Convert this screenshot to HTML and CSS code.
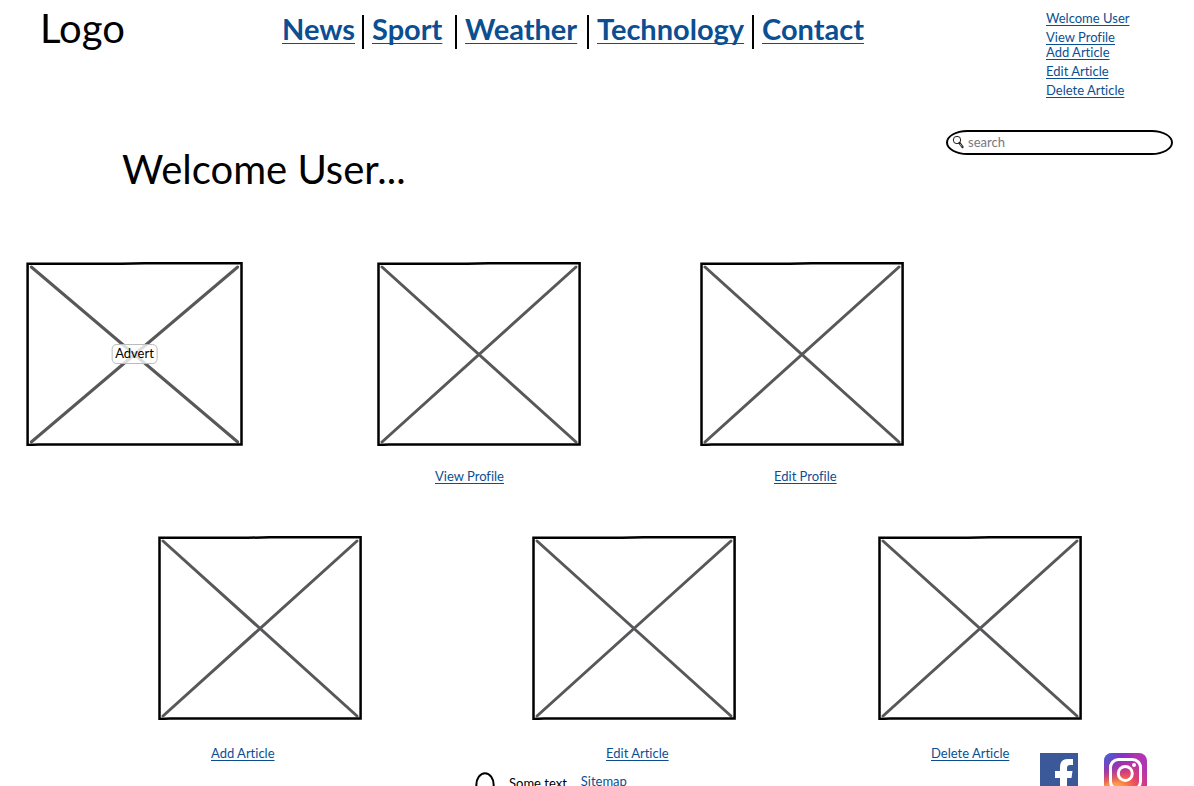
FILE: index.html
```html
<!DOCTYPE html>
<html lang="en">
<head>
<meta charset="utf-8">
<title>Welcome User</title>
<link rel="stylesheet" href="styles.css">
</head>
<body>
<svg class="defs" aria-hidden="true">
  <symbol id="placeholder" viewBox="0 0 204 184" preserveAspectRatio="none">
    <path class="cross" d="M5 5 199 180M199 5 5 180"/>
    <path class="frame" d="M1.500 1.800 90 1.800 112 1.300H202.600V182.600H12L1.500 182.900Z"/>
  </symbol>
</svg>
<header class="header">
  <div class="logo">Logo</div>
  <nav class="nav">
    <div><a href="#news">News</a></div>
    <div><a href="#sport">Sport</a></div>
    <div><a href="#weather">Weather</a></div>
    <div><a href="#technology">Technology</a></div>
    <div><a href="#contact">Contact</a></div>
  </nav>
  <ul class="user-links">
    <li><a href="#user">Welcome User</a></li>
    <li><a href="#profile">View Profile</a></li>
    <li class="tight"><a href="#add">Add Article</a></li>
    <li><a href="#edit">Edit Article</a></li>
    <li><a href="#delete">Delete Article</a></li>
  </ul>
</header>
<main>
  <div class="intro">
    <h1>Welcome User...</h1>
    <label class="search">
      <svg viewBox="0 0 12 14" width="12" height="14" aria-hidden="true"><circle cx="5" cy="5" r="3.700" fill="none" stroke="#222" stroke-width="1"/><path d="M7.500 8 10.500 12" stroke="#222" stroke-width="2.200" stroke-linecap="round"/><path d="M8 9 10 11.500" stroke="#fff" stroke-width=".6"/></svg>
      <input type="search" placeholder="search" aria-label="search">
    </label>
  </div>
  <div class="row row-first">
    <div class="card advert">
      <svg class="picture"><use href="#placeholder"/></svg>
      <span class="tag">Advert</span>
    </div>
    <div class="card">
      <svg class="picture"><use href="#placeholder"/></svg>
      <a class="caption inset-medium" href="#profile">View Profile</a>
    </div>
    <div class="card">
      <svg class="picture"><use href="#placeholder"/></svg>
      <a class="caption inset-large" href="#edit-profile">Edit Profile</a>
    </div>
  </div>
  <div class="row row-second">
    <div class="card">
      <svg class="picture"><use href="#placeholder"/></svg>
      <a class="caption" href="#add">Add Article</a>
    </div>
    <div class="card">
      <svg class="picture"><use href="#placeholder"/></svg>
      <a class="caption inset-large" href="#edit">Edit Article</a>
    </div>
    <div class="card">
      <svg class="picture"><use href="#placeholder"/></svg>
      <a class="caption" href="#delete">Delete Article</a>
    </div>
  </div>
</main>
<footer class="footer">
  <div class="footer-text">
    <svg viewBox="0 0 20 28" width="20" height="28" aria-hidden="true"><ellipse cx="10" cy="13" rx="8.700" ry="11.800" fill="none" stroke="#000" stroke-width="2"/></svg>
    <span>Some text</span>
    <a href="#sitemap">Sitemap</a>
  </div>
  <div class="social">
    <a href="#facebook" aria-label="Facebook"><svg viewBox="0 0 38 38" width="38" height="38"><path fill="#3b5998" d="M0 0H38V38H0Z"/><path fill="#fff" d="M20 38V25H15V18H20V14Q20 6 28 6H33V12H30Q27 12 27 15V18H32.500L31.500 25H27V38Z"/></svg></a>
    <a href="#instagram" aria-label="Instagram"><svg viewBox="0 0 43 43" width="43" height="43"><defs><radialGradient id="warm" cx=".25" cy="1" r="1.100"><stop offset="0" stop-color="#fd5"/><stop offset=".15" stop-color="#fdc050"/><stop offset=".38" stop-color="#f87040"/><stop offset=".58" stop-color="#e04070"/><stop offset=".85" stop-color="#b035b0"/></radialGradient><radialGradient id="cool" cx="0" cy="0" r=".75"><stop offset="0" stop-color="#3771d8"/><stop offset=".3" stop-color="#5050d0" stop-opacity=".8"/><stop offset="1" stop-color="#60f" stop-opacity="0"/></radialGradient></defs><rect width="43" height="43" rx="8" fill="url(#warm)"/><rect width="43" height="43" rx="8" fill="url(#cool)"/><g fill="none" stroke="#fff" stroke-width="3"><rect x="6.500" y="6.500" width="30" height="30" rx="8"/><circle cx="21.300" cy="20.500" r="7"/></g><circle cx="30" cy="12" r="2" fill="#fff"/></svg></a>
  </div>
</footer>
</body>
</html>
```
FILE: styles.css
```css
* { box-sizing: border-box; }
html { overflow-x: hidden; scrollbar-width: none; }
body {
  margin: 0;
  background: #fff;
  color: #000;
  font: 13px/16px Lato, "Open Sans", sans-serif;
  font-variant-ligatures: none;
}
a {
  color: #0b4f92;
  text-underline-offset: 2px;
  text-decoration-thickness: 1px;
  text-decoration-skip-ink: none;
}
.defs { display: none; }

.header {
  display: grid;
  grid-template-columns: 242fr 764fr 148fr;
  align-items: start;
  padding: 11px 0 0 40px;
}
.logo { font-size: 40px; line-height: 34px; }
.nav {
  display: grid;
  grid-template-columns:
    minmax(max-content, 82fr) minmax(max-content, 93fr)
    minmax(max-content, 132fr) minmax(max-content, 165fr)
    minmax(max-content, 292fr);
  padding-top: 4px;
}
.nav div {
  height: 34px;
  padding-left: 8px;
  border-right: 2px solid #000;
  line-height: 28px;
}
.nav div:first-child { padding-left: 0; }
.nav div:last-child { border-right: 0; }
.nav a {
  font-size: 29px;
  font-weight: 700;
  text-underline-offset: 3px;
}
.user-links {
  display: flex;
  flex-direction: column;
  gap: 4px;
  margin: 0;
  padding: 0;
  list-style: none;
  line-height: 15px;
}
.user-links .tight { margin-top: -4px; }

.intro {
  display: flex;
  justify-content: space-between;
  align-items: flex-start;
  margin-top: 32px;
  padding: 0 21px 0 122px;
}
h1 {
  margin: 0;
  padding-top: 14px;
  font-size: 40px;
  font-weight: 400;
  line-height: 50px;
}
.search {
  display: flex;
  align-items: center;
  gap: 4px;
  width: 227px;
  height: 25px;
  padding: 0 12px 2px 4px;
  border: 2px solid #000;
  border-radius: 22px / 13px;
}
.search input {
  flex: 1;
  min-width: 0;
  padding: 0;
  border: 0;
  outline: 0;
  background: none;
  font: inherit;
}
.search input::placeholder { color: #777780; opacity: 1; }

.row { display: grid; }
.row-first {
  grid-template-columns: 26fr 217fr 134fr 204fr 119fr 204fr 290fr;
  margin-top: 68px;
}
.row-second {
  grid-template-columns: 158fr 204fr 170fr 204fr 142fr 204fr 112fr;
  margin-top: 51px;
}
.card { min-width: 0; }
.card:nth-child(1) { grid-column: 2; }
.card:nth-child(2) { grid-column: 4; }
.card:nth-child(3) { grid-column: 6; }
.picture { display: block; width: 100%; height: 184px; }
.cross, .frame { fill: none; vector-effect: non-scaling-stroke; }
.cross { stroke: #58585a; stroke-width: 3px; stroke-linecap: round; }
.frame { stroke: #000; stroke-width: 2.5px; }
.caption { display: inline-block; margin: 21px 0 0 53px; line-height: 18px; }
.inset-medium { margin-left: 58px; }
.inset-large { margin-left: 74px; }
.row-second .caption { margin-top: 24px; }
.advert { position: relative; }
.tag {
  position: absolute;
  top: 92px;
  left: 50%;
  transform: translate(-50%, -50%);
  padding: 0 3px 2px;
  border: 1px solid #bbb;
  border-radius: 5px;
  background: rgba(255, 255, 255, .8);
}

.footer {
  display: grid;
  grid-template-columns: 475fr 565fr 154fr;
  align-items: start;
  margin-top: -9px;
}
.footer-text {
  grid-column: 2;
  display: flex;
  align-items: flex-start;
  gap: 14px;
  padding-top: 19px;
}
.footer-text span { padding-top: 3px; }
.footer-text a { padding-top: 1px; }
.social { display: flex; gap: 26px; }
.social svg { display: block; }
```
